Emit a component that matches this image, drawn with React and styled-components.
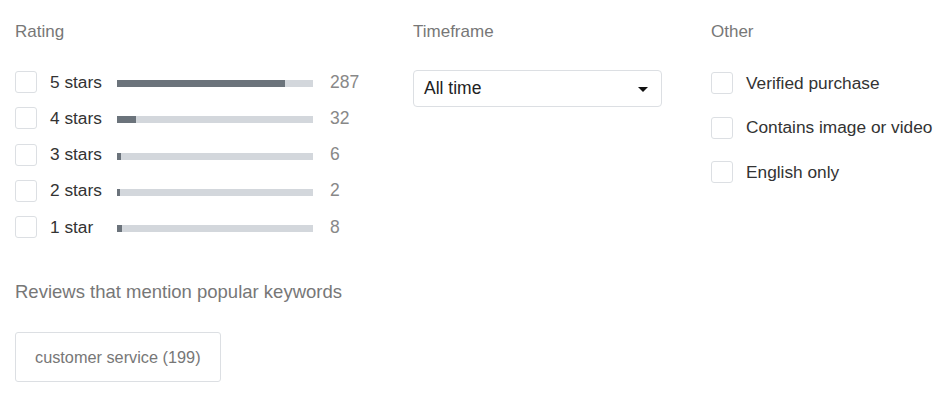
import React from 'react';
import styled, { createGlobalStyle } from 'styled-components';

const GlobalStyle = createGlobalStyle`
  body {
    margin: 0;
    background: #fff;
    font-family: "Liberation Sans", Arial, sans-serif;
    color: #333;
  }
`;

const ratings = [
  { label: '5 stars', count: 287 },
  { label: '4 stars', count: 32 },
  { label: '3 stars', count: 6 },
  { label: '2 stars', count: 2 },
  { label: '1 star', count: 8 },
];

const others = ['Verified purchase', 'Contains image or video', 'English only'];

export default function App() {
  const total = ratings.reduce((s, r) => s + r.count, 0);
  return (
    <Page>
      <GlobalStyle />
      <Filters>
        <Section>
          <Heading>Rating</Heading>
          <RatingList>
            {ratings.map((r) => (
              <RatingRow key={r.label}>
                <Box />
                <RowLabel $w="67px">{r.label}</RowLabel>
                <Bar>
                  <Fill style={{ width: `${Math.max((r.count / total) * 100, 1.5)}%` }} />
                </Bar>
                <Count>{r.count}</Count>
              </RatingRow>
            ))}
          </RatingList>
        </Section>
        <Section>
          <Heading>Timeframe</Heading>
          <Select>
            <span>All time</span>
            <Caret />
          </Select>
        </Section>
        <Section>
          <Heading>Other</Heading>
          <OtherList>
            {others.map((o) => (
              <OtherRow key={o}>
                <Box />
                <RowLabel>{o}</RowLabel>
              </OtherRow>
            ))}
          </OtherList>
        </Section>
      </Filters>
      <Keywords>
        <Heading $large>Reviews that mention popular keywords</Heading>
        <Chip>customer service (199)</Chip>
      </Keywords>
    </Page>
  );
}

const Page = styled.div`
  padding: 22px 15px 0;
`;

const Filters = styled.div`
  display: grid;
  grid-template-columns: 398px 298px 1fr;
`;

const Section = styled.div`
  display: flex;
  flex-direction: column;
`;

const Heading = styled.div`
  font-size: ${(p) => (p.$large ? '18.5px' : '17px')};
  line-height: 20px;
  color: #777;
`;

const RatingList = styled.div`
  margin-top: 22px;
  display: flex;
  flex-direction: column;
`;

const RatingRow = styled.div`
  display: flex;
  align-items: center;
  height: 36.25px;
`;

const Box = styled.span`
  width: 22px;
  height: 22px;
  border: 1px solid #dcdfe3;
  border-radius: 3px;
  box-sizing: border-box;
  flex: none;
  margin-right: 13px;
`;

const RowLabel = styled.span`
  font-size: 17.3px;
  color: #333;
  width: ${(p) => p.$w || 'auto'};
  white-space: nowrap;
`;

const Bar = styled.div`
  width: 196px;
  height: 7px;
  background: #d3d7dc;
  margin-top: 3px;
`;

const Fill = styled.div`
  height: 100%;
  background: #6b737b;
`;

const Count = styled.span`
  margin-left: 17px;
  font-size: 17.5px;
  color: #888;
`;

const Select = styled.div`
  margin-top: 28px;
  width: 249px;
  height: 37px;
  box-sizing: border-box;
  border: 1px solid #dcdfe3;
  border-radius: 4px;
  display: flex;
  align-items: center;
  justify-content: space-between;
  padding: 0 13px 0 10px;
  font-size: 17.5px;
  color: #222;
`;

const Caret = styled.span`
  width: 0;
  height: 0;
  border-left: 5px solid transparent;
  border-right: 5px solid transparent;
  border-top: 5px solid #111;
  margin-top: 2px;
`;

const OtherList = styled.div`
  margin-top: 19px;
  display: flex;
  flex-direction: column;
`;

const OtherRow = styled.div`
  display: flex;
  align-items: center;
  height: 44.5px;
`;

const Keywords = styled.div`
  margin-top: 37px;
  display: flex;
  flex-direction: column;
  align-items: flex-start;
`;

const Chip = styled.div`
  margin-top: 30px;
  height: 50px;
  box-sizing: border-box;
  border: 1px solid #dcdfe3;
  border-radius: 3px;
  padding: 0 19px;
  display: flex;
  align-items: center;
  font-size: 16.3px;
  color: #777;
`;
